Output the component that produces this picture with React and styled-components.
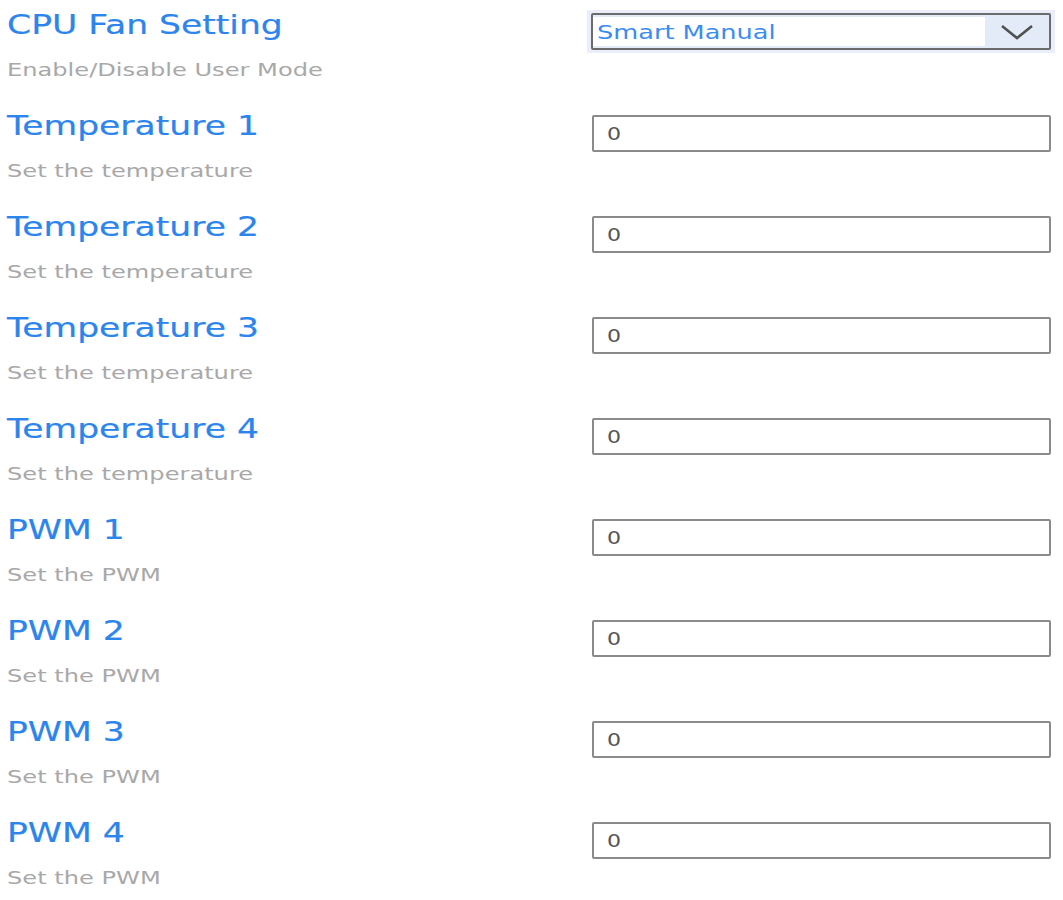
import React from 'react';
import styled, { createGlobalStyle } from 'styled-components';

const GlobalStyle = createGlobalStyle`
  html, body {
    margin: 0;
    padding: 0;
    background: #ffffff;
  }
  body {
    font-family: "DejaVu Sans", "Open Sans", sans-serif;
  }
`;

const Page = styled.div`
  width: 1063px;
  padding: 4px 0 0 7px;
  box-sizing: border-box;
`;

const Row = styled.div`
  display: grid;
  grid-template-columns: 580px 468px;
  height: 101px;
  align-items: start;
`;

const Label = styled.div`
  display: flex;
  flex-direction: column;
  align-items: flex-start;
`;

// the source screen is rendered with a horizontally stretched face
const Wide = styled.span`
  display: inline-block;
  white-space: nowrap;
  transform: scaleX(${(p) => p.$x || 1.28});
  transform-origin: left center;
`;

const Title = styled.div`
  color: #2b85ec;
  font-size: 27px;
  line-height: 42px;
  -webkit-text-stroke: 0.2px #2b85ec;
`;

const Help = styled.div`
  color: #a8a8a8;
  font-size: 18px;
  line-height: 22px;
  margin-top: 13px;
`;

const Field = styled.div`
  margin: 10px 0 0 5px;
  width: 459px;
  height: 37px;
  box-sizing: border-box;
  border: 2px solid #8a8a8a;
  border-radius: 2px;
  display: flex;
  align-items: center;
  padding-left: 13px;
  color: #555555;
  font-size: 17px;
  background: #ffffff;
`;

const SelectWrap = styled.div`
  margin-top: 6px;
  padding: 3px 4px;
  background: #e9eefa;
  width: 468px;
  box-sizing: border-box;
`;

const SelectBox = styled.div`
  height: 37px;
  box-sizing: border-box;
  border: 2px solid #6b6b6b;
  border-radius: 2px;
  display: flex;
  align-items: stretch;
  background: #e4ebf8;
`;

const SelectValue = styled.div`
  flex: 1;
  background: #ffffff;
  color: #3a8cf0;
  font-size: 20px;
  display: flex;
  align-items: center;
  padding-left: 4px;
  margin: 2px 0;
`;

const Arrow = styled.div`
  width: 64px;
  display: flex;
  align-items: center;
  justify-content: center;
`;

const rows = [
  { title: 'Temperature 1', help: 'Set the temperature' },
  { title: 'Temperature 2', help: 'Set the temperature' },
  { title: 'Temperature 3', help: 'Set the temperature' },
  { title: 'Temperature 4', help: 'Set the temperature' },
  { title: 'PWM 1', help: 'Set the PWM' },
  { title: 'PWM 2', help: 'Set the PWM' },
  { title: 'PWM 3', help: 'Set the PWM' },
  { title: 'PWM 4', help: 'Set the PWM' },
];

export default function App() {
  return (
    <>
      <GlobalStyle />
      <Page>
        <Row>
          <Label>
            <Title><Wide $x={1.28}>CPU Fan Setting</Wide></Title>
            <Help><Wide $x={1.34}>Enable/Disable User Mode</Wide></Help>
          </Label>
          <SelectWrap>
            <SelectBox>
              <SelectValue><Wide $x={1.28}>Smart Manual</Wide></SelectValue>
              <Arrow>
                <svg width="34" height="18" viewBox="0 0 34 18">
                  <path d="M2 3 L17 15 L32 3" fill="none" stroke="#505050" strokeWidth="2.6" />
                </svg>
              </Arrow>
            </SelectBox>
          </SelectWrap>
        </Row>
        {rows.map((r) => (
          <Row key={r.title}>
            <Label>
              <Title><Wide $x={1.28}>{r.title}</Wide></Title>
              <Help><Wide $x={1.34}>{r.help}</Wide></Help>
            </Label>
            <Field><Wide $x={1.3}>0</Wide></Field>
          </Row>
        ))}
      </Page>
    </>
  );
}
